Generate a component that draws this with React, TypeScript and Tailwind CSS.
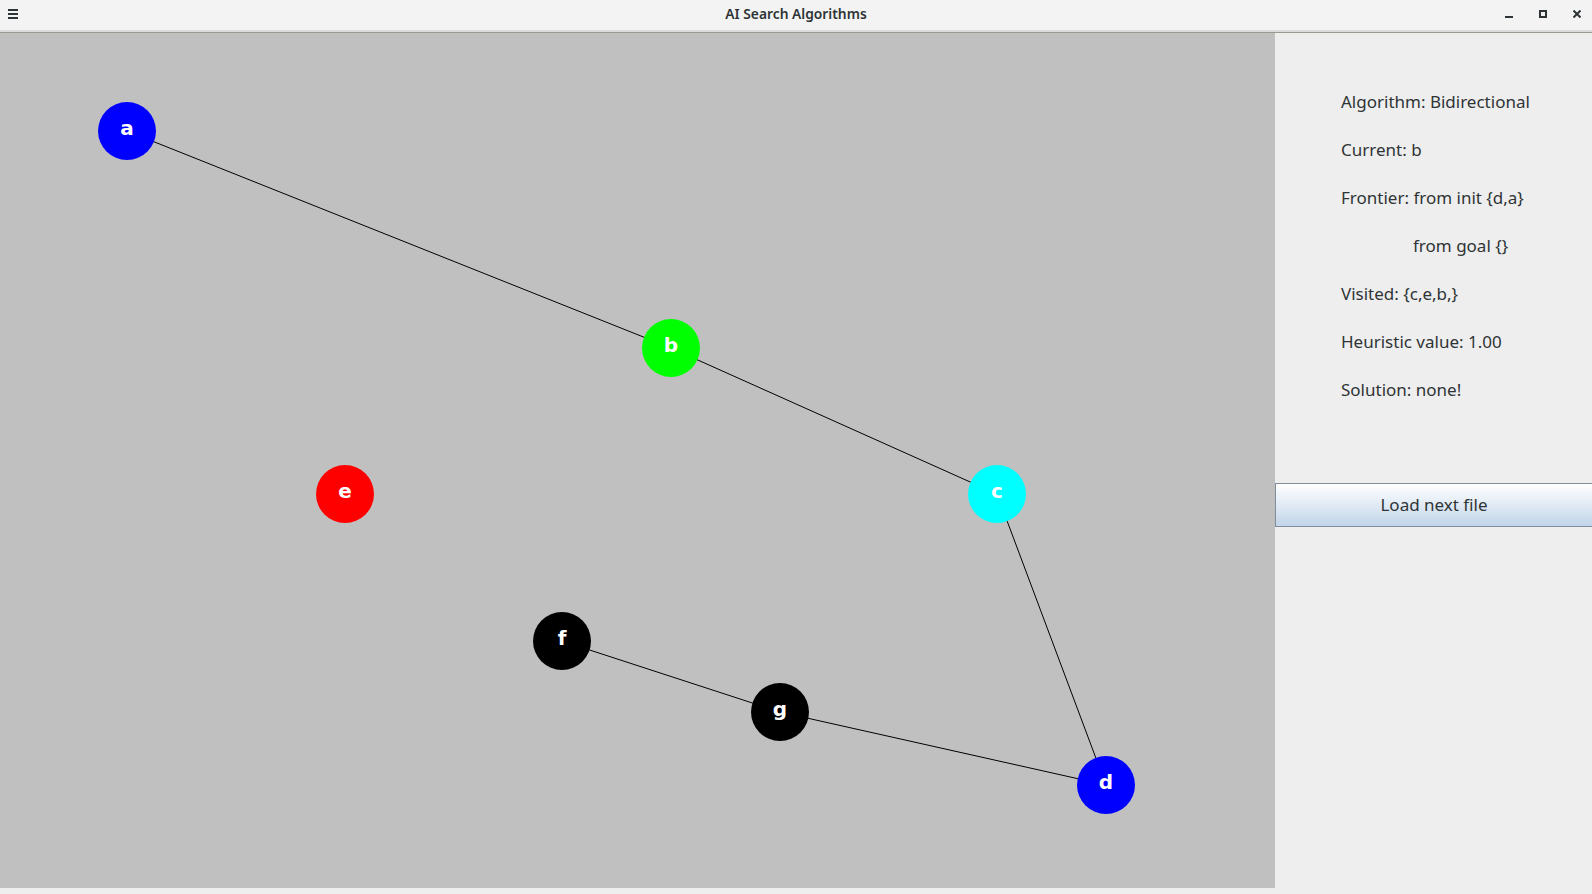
import React from 'react';

type GraphNode = { id: string; x: number; y: number; color: string };

const nodes: GraphNode[] = [
  { id: 'a', x: 127, y: 131, color: '#0000ff' },
  { id: 'b', x: 671, y: 348, color: '#00ff00' },
  { id: 'e', x: 345, y: 494, color: '#ff0000' },
  { id: 'c', x: 997, y: 494, color: '#00ffff' },
  { id: 'f', x: 562, y: 641, color: '#000000' },
  { id: 'g', x: 780, y: 712, color: '#000000' },
  { id: 'd', x: 1106, y: 785, color: '#0000ff' },
];

const edges: [string, string][] = [
  ['a', 'b'],
  ['b', 'c'],
  ['c', 'd'],
  ['d', 'g'],
  ['g', 'f'],
];

const info = [
  'Algorithm: Bidirectional',
  'Current: b',
  'Frontier: from init {d,a}',
  null,
  'Visited: {c,e,b,}',
  'Heuristic value: 1.00',
  'Solution: none!',
];

const byId = (id: string) => nodes.find((n) => n.id === id)!;

const TitleBar = () => (
  <div className="relative h-[33px] bg-[#f3f3f3] border-b border-[#9a9a92] flex items-center justify-center shadow-[inset_0_-2px_0_#dcdcdc]">
    <svg className="absolute left-[8px] top-[9px]" width="10" height="10" viewBox="0 0 10 10">
      <rect x="0" y="0" width="10" height="2" fill="#2e3436" />
      <rect x="0" y="4" width="10" height="2" fill="#2e3436" />
      <rect x="0" y="8" width="10" height="2" fill="#2e3436" />
    </svg>
    <span className="text-[13.8px] font-semibold text-[#2e3436] -mt-[3px]">AI Search Algorithms</span>
    <div className="absolute right-0 top-0 h-full flex items-start">
      <svg className="ml-0 mt-[16px] mr-[26px]" width="8" height="2" viewBox="0 0 8 2">
        <rect width="8" height="2" fill="#2e3436" />
      </svg>
      <svg className="mt-[10px] mr-[26px]" width="8" height="8" viewBox="0 0 8 8">
        <rect x="1" y="1" width="6" height="6" fill="none" stroke="#2e3436" strokeWidth="2" />
      </svg>
      <svg className="mt-[10px] mr-[11px]" width="8" height="8" viewBox="0 0 8 8">
        <path d="M0.5 0.5 L7.5 7.5 M7.5 0.5 L0.5 7.5" stroke="#2e3436" strokeWidth="2" />
      </svg>
    </div>
  </div>
);

const GraphCanvas = () => (
  <div className="relative w-[1275px] h-[855px] bg-[#c0c0c0] shrink-0 overflow-hidden">
    <svg className="absolute inset-0" width="1275" height="855">
      {edges.map(([from, to]) => {
        const a = byId(from);
        const b = byId(to);
        return (
          <line key={from + to} x1={a.x} y1={a.y - 33} x2={b.x} y2={b.y - 33} stroke="#000" strokeWidth="1" />
        );
      })}
    </svg>
    {nodes.map((n) => (
      <div
        key={n.id}
        className="absolute w-[58px] h-[58px] rounded-full flex items-center justify-center text-white font-bold text-[20px] font-['DejaVu_Sans',sans-serif]"
        style={{ left: n.x - 29, top: n.y - 33 - 29, backgroundColor: n.color }}
      >
        <span className="-mt-[6px]">{n.id}</span>
      </div>
    ))}
  </div>
);

const Sidebar = () => (
  <div className="flex-1 flex flex-col">
    <div className="pt-[45px] pl-[66px] text-[17px] text-[#2e3436]">
      {info.map((line, i) =>
        line ? (
          <p key={i} className="leading-[48px] h-[48px] whitespace-nowrap">{line}</p>
        ) : (
          <p key={i} className="leading-[48px] h-[48px] pl-[72px] whitespace-nowrap">from goal {'{}'}</p>
        )
      )}
    </div>
    <button className="mt-[69px] h-[44px] w-full border border-[#7f8c99] border-r-0 bg-gradient-to-b from-[#ffffff] to-[#c2d5ea] text-[17px] text-[#2e3436] flex items-center justify-center">
      Load next file
    </button>
  </div>
);

export default function App() {
  return (
    <div className="w-[1592px] h-[894px] bg-[#eeeeee] flex flex-col overflow-hidden font-['Noto_Sans',sans-serif]">
      <TitleBar />
      <div className="flex flex-1">
        <GraphCanvas />
        <Sidebar />
      </div>
    </div>
  );
}
